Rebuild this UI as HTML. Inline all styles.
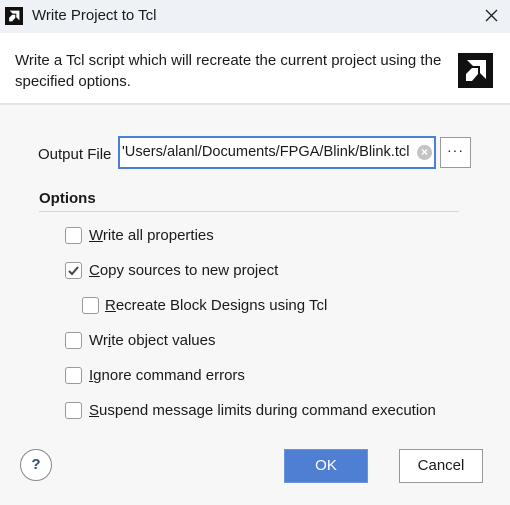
<!DOCTYPE html>
<html><head><meta charset="utf-8"><style>
*{margin:0;padding:0;box-sizing:border-box}
body{width:510px;height:505px;background:#f7f7f7;font-family:"Segoe UI","Liberation Sans",sans-serif;font-size:15px;color:#1a1a1a;position:relative;overflow:hidden}
.abs{position:absolute}
.title{left:0;top:0;width:510px;height:33px;background:#eef2f7}
.hdr{left:0;top:33px;width:510px;height:72px;background:#fff;border-bottom:2px solid #e4e4e4}
.cb{position:absolute;width:17px;height:17px;border:1.5px solid #9a9a9a;border-radius:3px;background:#fff}
.lbl{position:absolute;font-size:15px;line-height:17px}
u{text-decoration:underline}
</style></head><body>
<div class="abs title">
 <svg class="abs" style="left:5px;top:7px" width="18" height="18" viewBox="0 0 35 35"><rect width="35" height="35" fill="#111"/><polygon points="9,7 28,7 28,26 22,20 22,13 15,13" fill="#fff"/><polygon points="8,21 14,15 20,15 20,21 14,28 8,28" fill="#fff"/></svg>
 <div class="abs" style="left:32px;top:7px;font-size:15px">Write Project to Tcl</div>
 <svg class="abs" style="left:485px;top:9px" width="13" height="13" viewBox="0 0 13 13"><path d="M1 1L12 12M12 1L1 12" stroke="#222" stroke-width="1.3"/></svg>
</div>
<div class="abs hdr">
 <div class="abs" style="left:15px;top:17px;width:440px;line-height:21px;font-size:15px">Write a Tcl script which will recreate the current project using the specified options.</div>
 <svg class="abs" style="left:458px;top:20px" width="35" height="35" viewBox="0 0 35 35"><rect width="35" height="35" fill="#111"/><polygon points="9,7 28,7 28,26 22,20 22,13 15,13" fill="#fff"/><polygon points="8,21 14,15 20,15 20,21 14,28 8,28" fill="#fff"/></svg>
</div>
<div class="lbl" style="left:38px;top:146px">Output File</div>
<div class="abs" style="left:118px;top:136px;width:318px;height:33px;border:2px solid #4a7fd4;background:#fff;overflow:hidden">
 <div class="abs" style="left:2px;top:6px;white-space:nowrap;font-size:14.6px">'Users/alanl/Documents/FPGA/Blink/Blink.tcl</div>
 <div class="abs" style="right:2px;top:7px;width:15px;height:15px;border-radius:50%;background:#c4c4c4;color:#fff;font-size:12px;line-height:15px;text-align:center;font-weight:bold">×</div>
</div>
<div class="abs" style="left:440px;top:137px;width:31px;height:31px;border:1.5px solid #9a9a9a;background:#fff;text-align:center;font-size:14px;line-height:24px;letter-spacing:1px">···</div>
<div class="lbl" style="left:39px;top:190px;font-weight:bold">Options</div>
<div class="abs" style="left:39px;top:211px;width:420px;height:1px;background:#d6d6d6"></div>

<div class="cb" style="left:65px;top:227px"></div><div class="lbl" style="left:89px;top:227px"><u>W</u>rite all properties</div>
<div class="cb" style="left:65px;top:262px"><svg class="abs" style="left:1px;top:1px" width="13" height="13" viewBox="0 0 13 13"><path d="M2 7L5 10L11 3" stroke="#444" stroke-width="2" fill="none"/></svg></div><div class="lbl" style="left:89px;top:262px"><u>C</u>opy sources to new project</div>
<div class="cb" style="left:82px;top:297px"></div><div class="lbl" style="left:105px;top:297px"><u>R</u>ecreate Block Designs using Tcl</div>
<div class="cb" style="left:65px;top:332px"></div><div class="lbl" style="left:89px;top:332px">Wr<u>i</u>te object values</div>
<div class="cb" style="left:65px;top:367px"></div><div class="lbl" style="left:89px;top:367px"><u>I</u>gnore command errors</div>
<div class="cb" style="left:65px;top:402px"></div><div class="lbl" style="left:89px;top:402px"><u>S</u>uspend message limits during command execution</div>

<div class="abs" style="left:20px;top:449px;width:32px;height:32px;border:1.3px solid #888;border-radius:50%;background:#fff;text-align:center;line-height:29px;font-weight:bold;color:#2d4a7a;font-size:15px">?</div>
<div class="abs" style="left:284px;top:449px;width:84px;height:34px;background:#4f7fd2;border:1px solid #6b95dc;color:#fff;text-align:center;line-height:32px">OK</div>
<div class="abs" style="left:399px;top:449px;width:84px;height:34px;background:#fff;border:1.5px solid #999;text-align:center;line-height:31px">Cancel</div>
</body></html>
